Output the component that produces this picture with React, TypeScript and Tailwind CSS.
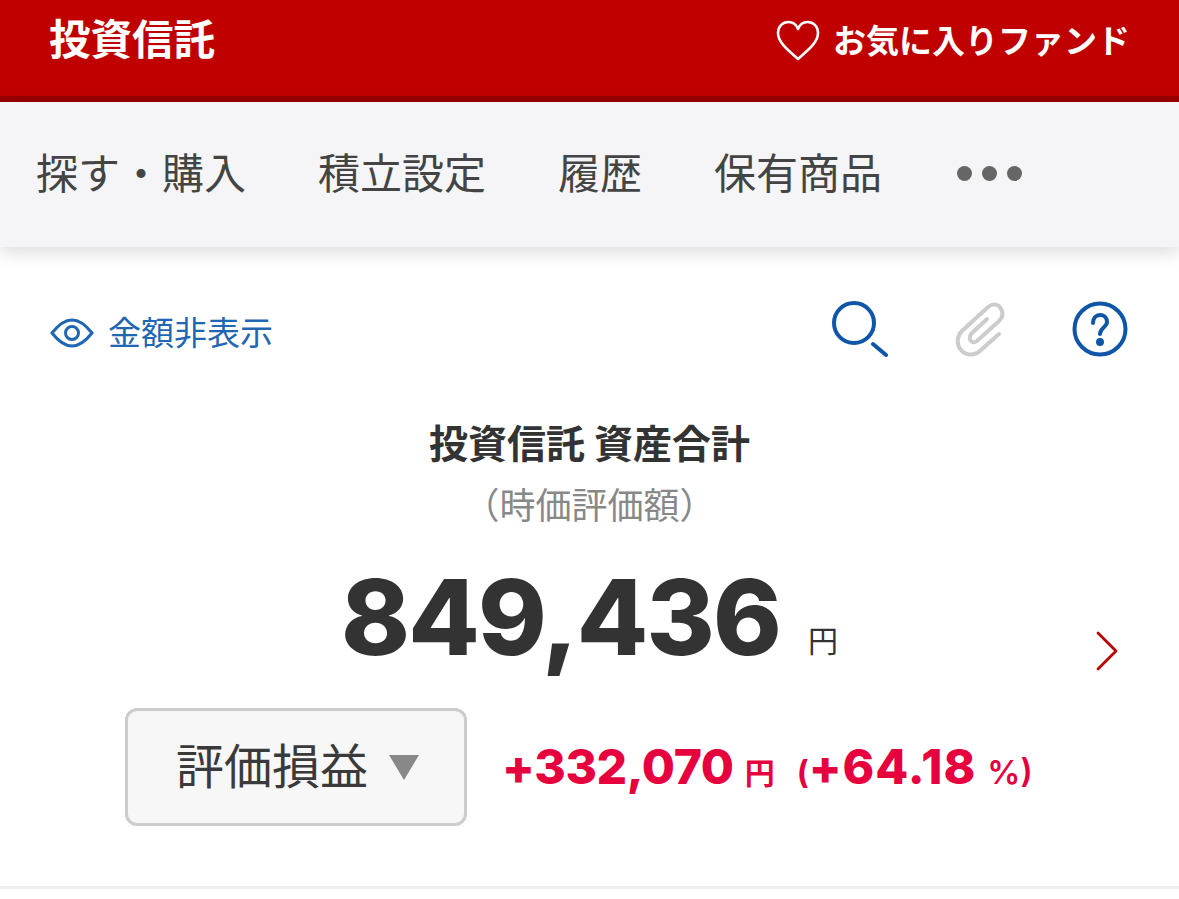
import React from 'react';

const cjk = "font-['Inter','Noto_Sans_CJK_JP',sans-serif]";

const NAV_ITEMS = ['探す・購入', '積立設定', '履歴', '保有商品'];

export default function App() {
  return (
    <div className={`${cjk} w-[1179px] h-[899px] overflow-hidden bg-white text-[#333]`}>
      {/* Red header */}
      <header className="h-[102px] bg-[#c00000] border-b-[6px] border-[#990000] flex items-center justify-between pl-[49px] pr-[49px] pb-[14px] text-white">
        <div className="text-[41.500px] font-bold leading-none">投資信託</div>
        <div className="flex items-center gap-[13px]">
          <svg width="44" height="42" viewBox="0 0 44 42" fill="none" stroke="#fff" strokeWidth="2.6" strokeLinejoin="round">
            <path d="M22 39 C16 33 2 24 2 13 C2 6 7 2 12.500 2 C17 2 20.500 5 22 9 C23.500 5 27 2 31.500 2 C37 2 42 6 42 13 C42 24 28 33 22 39 Z" />
          </svg>
          <span className="text-[33px] font-bold leading-none">お気に入りファンド</span>
        </div>
      </header>

      {/* Tabs */}
      <nav className="h-[145px] bg-[#f5f5f7] shadow-[0_4px_18px_rgba(0,0,0,0.16)] flex items-center pl-[36px] pb-[2px] gap-[72px] text-[42px] text-[#444] relative">
        {NAV_ITEMS.map((item) => (
          <span key={item} className="leading-none">{item}</span>
        ))}
        <span className="flex gap-[10px] ml-[3px]">
          <i className="w-[15px] h-[15px] rounded-full bg-[#666]" />
          <i className="w-[15px] h-[15px] rounded-full bg-[#666]" />
          <i className="w-[15px] h-[15px] rounded-full bg-[#666]" />
        </span>
      </nav>

      {/* Tools row */}
      <div className="flex items-center justify-between pl-[50px] pr-[51px] pt-[54px]">
        <div className="flex items-center gap-[14px] text-[#1f66b3] pt-[8px]">
          <svg width="44" height="30" viewBox="0 0 44 30" fill="none" stroke="currentColor" strokeWidth="3">
            <path d="M2 15 C9 6 15 2 22 2 C29 2 35 6 42 15 C35 24 29 28 22 28 C15 28 9 24 2 15 Z" />
            <circle cx="22" cy="15" r="6.500" />
          </svg>
          <span className="text-[33px] leading-none">金額非表示</span>
        </div>
        <div className="flex items-center gap-[67px]">
          <svg width="56" height="56" viewBox="0 0 56 56" fill="none" stroke="#0f56a8" strokeWidth="4" strokeLinecap="round">
            <circle cx="22" cy="22" r="20" />
            <path d="M41 43 L54 54" />
          </svg>
          <svg width="50" height="56" viewBox="0 0 50 56" fill="none" stroke="#ccc" strokeWidth="4" strokeLinecap="round">
            <path d="M44 33 L26 49 C20 55 11 55 6 49 C1 43 2 35 7 30 L33 6 C38 2 44 3 46 8 C49 13 47 17 44 20 L22 40 C18 43 14 40 15 36 C15 34 16 33 17 32 L32 18" />
          </svg>
          <svg width="56" height="56" viewBox="0 0 56 56" fill="none" stroke="#0f56a8" strokeWidth="4" strokeLinecap="round">
            <circle cx="28" cy="28" r="25.500" />
            <path d="M21 22 C21 17 24 14 28 14 C33 14 35 18 35 21 C35 26 28 27 28 33" />
            <circle cx="28" cy="41" r="2" fill="#0f56a8" />
          </svg>
        </div>
      </div>

      {/* Total */}
      <section className="flex flex-col items-center mt-[67px] relative">
        <h2 className="text-[39px] font-bold leading-none">投資信託 資産合計</h2>
        <div className="text-[36px] leading-none mt-[25px] text-[#888]">（時価評価額）</div>
        <div className="flex items-baseline mt-[41px]">
          <span className="text-[104px] font-extrabold leading-none tracking-[-1.800px]">849,436</span>
          <span className="text-[30px] ml-[28px] leading-none -translate-y-[3px]">円</span>
        </div>
        <svg className="absolute right-[60px] top-[206px]" width="24" height="42" viewBox="0 0 24 42" fill="none" stroke="#b80000" strokeWidth="2.800" strokeLinecap="round" strokeLinejoin="round">
          <path d="M3 3 L21 21 L3 39" />
        </svg>
      </section>

      {/* Profit and loss */}
      <div className="flex items-center pl-[125px] mt-[39px]">
        <div className="w-[342px] h-[118px] rounded-[12px] border-[3px] border-[#ccc] bg-[#f7f7f7] flex items-center justify-center gap-[21px] pl-[3px] shrink-0">
          <span className="text-[48px] leading-none text-[#3a3a3a]">評価損益</span>
          <span className="w-0 h-0 border-l-[15px] border-r-[15px] border-t-[25px] border-l-transparent border-r-transparent border-t-[#888]" />
        </div>
        <div className="flex items-baseline ml-[35px] text-[#e6003e] font-bold">
          <span className="text-[48px] font-extrabold leading-none tracking-[-0.400px]">+332,070</span>
          <span className="text-[30px] leading-none ml-[11px]">円</span>
          <span className="text-[32px] leading-none ml-[22px]">(</span>
          <span className="text-[48px] font-extrabold leading-none tracking-[1px]">+64.18</span>
          <span className="text-[33px] font-semibold leading-none ml-[11px]">%)</span>
        </div>
      </div>

      <div className="h-[3px] bg-[#eeeeee] mt-[60px]" />
    </div>
  );
}
